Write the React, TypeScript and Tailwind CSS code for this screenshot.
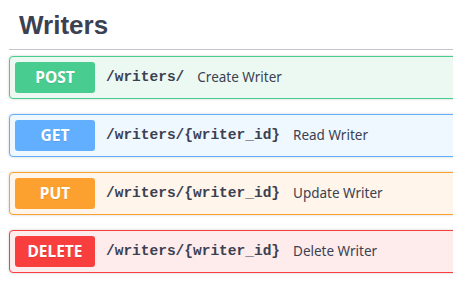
const ops = [
  { method: "POST", path: "/writers/", summary: "Create Writer", box: "border-[#49cc90] bg-[#ecf9f3]", badge: "bg-[#49cc90]" },
  { method: "GET", path: "/writers/{writer_id}", summary: "Read Writer", box: "border-[#61affe] bg-[#eff7ff]", badge: "bg-[#61affe]" },
  { method: "PUT", path: "/writers/{writer_id}", summary: "Update Writer", box: "border-[#fca130] bg-[#fff5ea]", badge: "bg-[#fca130]" },
  { method: "DELETE", path: "/writers/{writer_id}", summary: "Delete Writer", box: "border-[#f93e3e] bg-[#feebeb]", badge: "bg-[#f93e3e]" },
];

export default function App() {
  return (
    <div className="w-[453px] h-[298px] overflow-hidden bg-white text-[#3b4151]">
      <div className="w-[520px] pl-[9px]">
        <h3 className="h-[50px] border-b border-[#c4c6cb] pl-[10px] pt-[9px] text-[26px] font-bold leading-[32px] font-['Liberation_Sans',sans-serif]">
          Writers
        </h3>
        <div className="mt-[6px] flex flex-col gap-[15px]">
          {ops.map((op) => (
            <div
              key={op.method}
              className={`flex h-[43px] items-center rounded-[4px] border px-[5px] shadow-[0_0_3px_rgba(0,0,0,0.19)] ${op.box}`}
            >
              <span
                className={`flex h-[31px] w-[80px] items-center justify-center rounded-[3px] text-[15.5px] font-bold text-white [text-shadow:0_1px_0_rgba(0,0,0,0.1)] font-['Noto_Sans',sans-serif] ${op.badge}`}
              >
                {op.method}
              </span>
              <span className="pl-[11px] pr-[13px] text-[14.5px] font-bold font-['Liberation_Mono',monospace]">
                {op.path}
              </span>
              <span className="text-[13.5px] font-['Noto_Sans',sans-serif]">{op.summary}</span>
            </div>
          ))}
        </div>
      </div>
    </div>
  );
}
